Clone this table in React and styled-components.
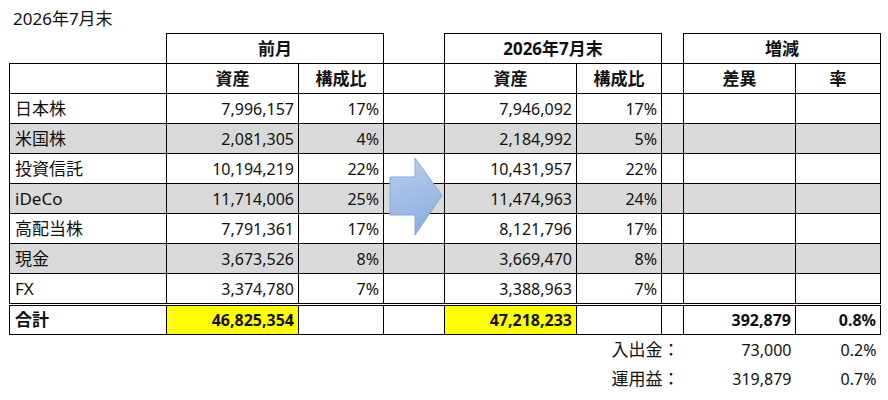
import React from 'react'
import styled, { createGlobalStyle } from 'styled-components'

const GlobalStyle = createGlobalStyle`
  html, body {
    margin: 0;
    padding: 0;
    background: #fff;
  }
  body {
    font-family: "Noto Sans", "Noto Sans CJK JP", sans-serif;
    color: #111;
  }
`

const rows = [
  { name: '日本株', prev: '7,996,157', prevRate: '17%', cur: '7,946,092', curRate: '17%' },
  { name: '米国株', prev: '2,081,305', prevRate: '4%', cur: '2,184,992', curRate: '5%' },
  { name: '投資信託', prev: '10,194,219', prevRate: '22%', cur: '10,431,957', curRate: '22%' },
  { name: 'iDeCo', prev: '11,714,006', prevRate: '25%', cur: '11,474,963', curRate: '24%' },
  { name: '高配当株', prev: '7,791,361', prevRate: '17%', cur: '8,121,796', curRate: '17%' },
  { name: '現金', prev: '3,673,526', prevRate: '8%', cur: '3,669,470', curRate: '8%' },
  { name: 'FX', prev: '3,374,780', prevRate: '7%', cur: '3,388,963', curRate: '7%' },
]

const widths = [157, 132, 85, 61, 132, 85, 22, 112, 85]

const App = () => {
  return (
    <>
      <GlobalStyle />
      <Sheet>
        <Title>2026年7月末</Title>
        <TableWrap>
          <Table>
            <colgroup>
              {widths.map((w, i) => <Col key={i} $w={w} />)}
            </colgroup>
            <tbody>
              <Row>
                <Blank />
                <HeadCell colSpan={2}>前月</HeadCell>
                <Blank />
                <HeadCell colSpan={2}>2026年7月末</HeadCell>
                <Blank />
                <HeadCell colSpan={2}>増減</HeadCell>
              </Row>
              <Row>
                <Cell />
                <HeadCell>資産</HeadCell>
                <HeadCell>構成比</HeadCell>
                <Cell />
                <HeadCell>資産</HeadCell>
                <HeadCell>構成比</HeadCell>
                <Cell />
                <HeadCell>差異</HeadCell>
                <HeadCell>率</HeadCell>
              </Row>
              {rows.map((r, i) => (
                <Row key={r.name} $shade={i % 2 === 1}>
                  <Cell $jp>{r.name}</Cell>
                  <Cell $num>{r.prev}</Cell>
                  <Cell $num>{r.prevRate}</Cell>
                  <Cell />
                  <Cell $num>{r.cur}</Cell>
                  <Cell $num>{r.curRate}</Cell>
                  <Cell />
                  <Cell />
                  <Cell />
                </Row>
              ))}
              <Row $total>
                <Cell $bold $jp>合計</Cell>
                <Cell $num $bold $yellow>46,825,354</Cell>
                <Cell />
                <Cell />
                <Cell $num $bold $yellow>47,218,233</Cell>
                <Cell />
                <Cell />
                <Cell $num $bold>392,879</Cell>
                <Cell $num $bold>0.8%</Cell>
              </Row>
              <Row>
                <Blank colSpan={4} />
                <Note colSpan={3} $jp>入出金：</Note>
                <Note>73,000</Note>
                <Note>0.2%</Note>
              </Row>
              <Row>
                <Blank colSpan={4} />
                <Note colSpan={3} $jp>運用益：</Note>
                <Note>319,879</Note>
                <Note>0.7%</Note>
              </Row>
            </tbody>
          </Table>
          <Arrow viewBox="0 0 54 80" width="54" height="80">
            <defs>
              <linearGradient id="arrowFill" x1="0" y1="0" x2="0.3" y2="1">
                <stop offset="0" stopColor="#b9cfee" />
                <stop offset="1" stopColor="#8eb0e0" />
              </linearGradient>
            </defs>
            <path
              d="M1 20 H26 V1 L53 38.5 L26 78 V58 H1 Z"
              fill="url(#arrowFill)"
              stroke="#86a9db"
              strokeWidth="1"
            />
          </Arrow>
        </TableWrap>
      </Sheet>
    </>
  )
}

const Sheet = styled.div`
  width: 888px;
  height: 400px;
  overflow: hidden;
  font-size: 16px;
`

const Title = styled.div`
  height: 33px;
  padding: 8px 0 0 13px;
  box-sizing: border-box;
  font-size: 17px;
  line-height: 22px;
`

const TableWrap = styled.div`
  position: relative;
  margin-left: 9px;
  width: 872px;
`

const Table = styled.table`
  border-collapse: collapse;
  table-layout: fixed;
  width: 872px;
`

const Col = styled.col`
  width: ${p => p.$w}px;
`

const Row = styled.tr`
  background: ${p => (p.$shade ? '#d9d9d9' : 'transparent')};

  td {
    height: 29px;
  }

  ${p => p.$total && `
    td {
      border-top: 3px double #000;
      height: 28px;
    }
  `}
`

const Cell = styled.td`
  border: 1px solid #000;
  padding: 0 4px 0 5px;
  line-height: 20px;
  white-space: nowrap;
  font-size: ${p => (p.$jp ? '17px' : '16px')};
  text-align: ${p => (p.$num ? 'right' : 'left')};
  font-weight: ${p => (p.$bold ? 700 : 400)};
  background: ${p => (p.$yellow ? '#ffff00' : 'transparent')};
`

const HeadCell = styled.td`
  border: 1px solid #000;
  padding: 0;
  line-height: 20px;
  font-size: 17px;
  text-align: center;
  font-weight: 700;
  white-space: nowrap;
`

const Blank = styled.td`
  border: none;
  padding: 0;
`

const Note = styled.td`
  border: none;
  padding: 0 4px 0 0;
  line-height: 20px;
  font-size: ${p => (p.$jp ? '17px' : '16px')};
  text-align: right;
  white-space: nowrap;
`

const Arrow = styled.svg`
  position: absolute;
  left: 380px;
  top: 124px;
  display: block;
`

export default App
